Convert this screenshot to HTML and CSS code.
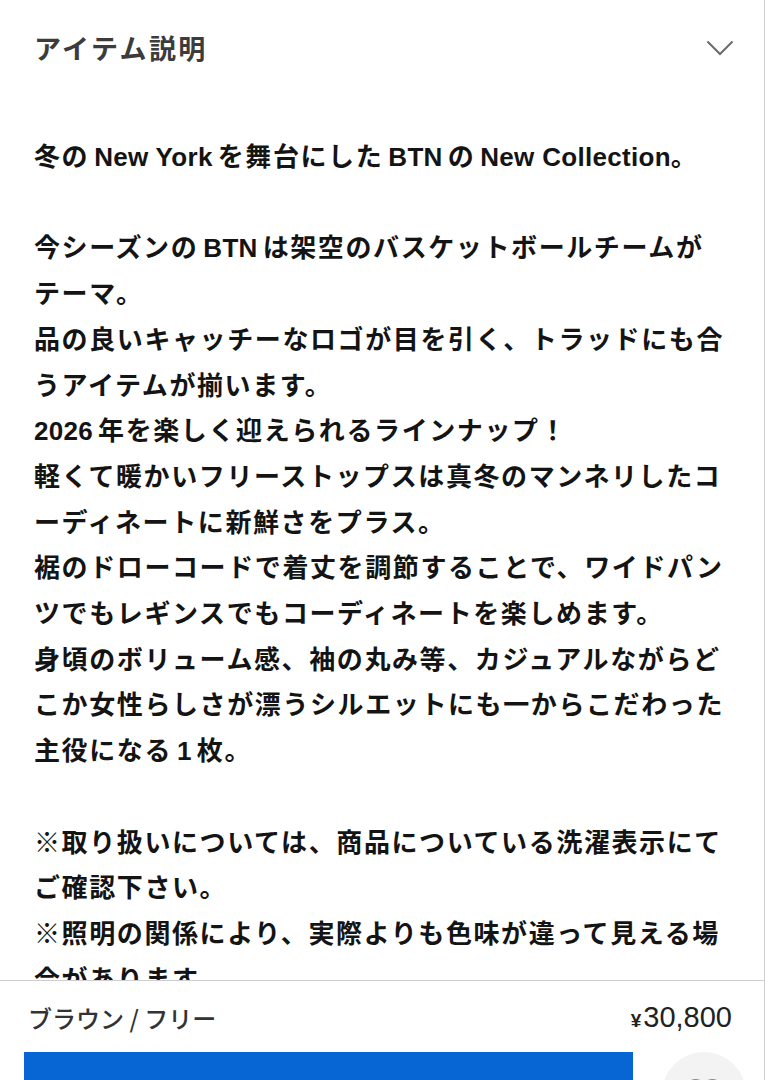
FILE: index.html
```html
<!DOCTYPE html>
<html lang="ja">
<head>
<meta charset="utf-8">
<title>アイテム説明</title>
<link rel="stylesheet" href="styles.css">
</head>
<body>
<div class="page">
  <div class="header">
    <h2 class="title">アイテム説明</h2>
    <svg class="chevron" width="28" height="16" viewBox="0 0 28 16"><path d="M1.5 1.5 L14 14 L26.5 1.5" fill="none" stroke="#6b6b6b" stroke-width="2"/></svg>
  </div>
  <div class="desc">
    <p>冬の<span class="en">New York</span>を舞台にした<span class="en">BTN</span>の<span class="en last">New Collection</span>。</p>
    <p>今シーズンの<span class="en">BTN</span>は架空のバスケットボールチームがテーマ。<br>品の良いキャッチーなロゴが目を引く、トラッドにも合うアイテムが揃います。<br><span class="en first">2026</span>年を楽しく迎えられるラインナップ！<br>軽くて暖かいフリーストップスは真冬のマンネリしたコーディネートに新鮮さをプラス。<br>裾のドローコードで着丈を調節することで、ワイドパンツでもレギンスでもコーディネートを楽しめます。<br>身頃のボリューム感、袖の丸み等、カジュアルながらどこか女性らしさが漂うシルエットにも一からこだわった主役になる<span class="en">1</span>枚。</p>
    <p>※取り扱いについては、商品についている洗濯表示にてご確認下さい。<br>※照明の関係により、実際よりも色味が違って見える場合があります。</p>
  </div>
  <div class="bar">
    <div class="bar-info">
      <span class="variant">ブラウン / フリー</span>
      <span class="price"><span class="yen">¥</span>30,800</span>
    </div>
    <div class="bar-actions">
      <button class="cart">カートに入れる</button>
      <button class="fav" aria-label="お気に入り">
        <svg width="36" height="32" viewBox="0 0 36 32"><path d="M18 30 C8 22 2 16 2 9.5 C2 5 5.5 2 9.5 2 C13 2 16 4 18 7 C20 4 23 2 26.5 2 C30.5 2 34 5 34 9.5 C34 16 28 22 18 30 Z" fill="none" stroke="#8a8a8a" stroke-width="2.2" stroke-linejoin="round"/></svg>
      </button>
    </div>
  </div>
</div>
</body>
</html>
```
FILE: styles.css
```css
* { box-sizing: border-box; }
html, body { margin: 0; padding: 0; background: #fff; }
body {
  font-family: "Noto Sans CJK JP", "Noto Sans", sans-serif;
  color: #111;
}
.page {
  position: relative;
  width: 765px;
  height: 1080px;
  overflow: hidden;
  border-right: 1px solid #cfcfcf;
  background: #fff;
}
.header {
  height: 94px;
  display: flex;
  align-items: center;
  justify-content: space-between;
  padding: 0 30px 0 34px;
}
.title {
  margin: 0;
  font-size: 27px;
  font-weight: 700;
  color: #3c3c3c;
  letter-spacing: 2.4px;
}
.chevron { margin-top: 2px; }
.desc {
  margin-top: 38px;
  padding: 0 40px 0 34px;
  font-size: 26px;
  line-height: 45.7px;
  letter-spacing: 1.6px;
  font-weight: 700;
  color: #141414;
}
.desc p { margin: 0 0 45.7px; }
.en {
  font-family: "Liberation Sans", "Noto Sans", sans-serif;
  letter-spacing: 0.3px;
  line-height: 1;
  margin: 0 5px;
}
.en.first { margin-left: 0; }
.en.last { margin-right: 0; }
.bar {
  position: absolute;
  left: 0;
  right: 0;
  bottom: 0;
  height: 100px;
  background: #fff;
  border-top: 1px solid #cfcfcf;
  padding: 21px 0 0 0;
}
.bar-info {
  display: flex;
  justify-content: space-between;
  align-items: center;
  height: 30px;
  padding: 0 32px 0 28px;
}
.variant {
  font-size: 24px;
  color: #333;
  font-weight: 500;
}
.price {
  font-family: "Liberation Sans", "Noto Sans", sans-serif;
  font-size: 29px;
  color: #222;
  font-weight: 400;
}
.yen { font-size: 19px; font-weight: 700; margin-right: 2px; }
.bar-actions {
  display: flex;
  align-items: flex-start;
  gap: 29px;
  padding: 0 0 0 24px;
  margin-top: 20px;
}
.cart {
  width: 609px;
  height: 80px;
  border: none;
  background: #0766d4;
  color: #fff;
  font-family: inherit;
  font-size: 24px;
  font-weight: 700;
}
.fav {
  width: 84px;
  height: 84px;
  border-radius: 50%;
  border: none;
  background: #f3f3f3;
  display: flex;
  align-items: center;
  justify-content: center;
  padding: 0;
}
```
